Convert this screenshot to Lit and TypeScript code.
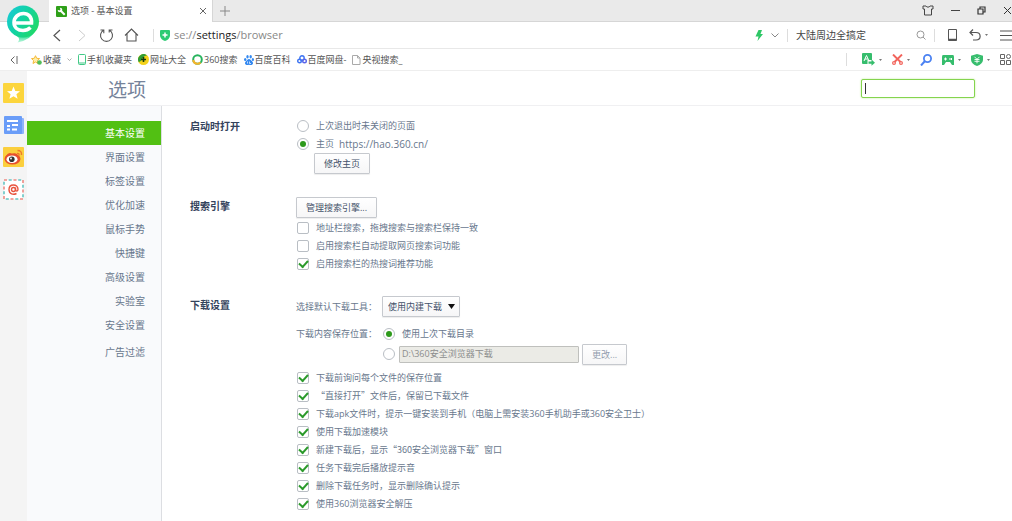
import { LitElement, html, css, svg } from "lit";
import { customElement } from "lit/decorators.js";
import { classMap } from "lit/directives/class-map.js";

const icon = (w: number, h: number, box: string, body: unknown) =>
  html`<svg width=${w} height=${h} viewBox=${box} fill="none" aria-hidden="true">${body}</svg>`;

const logo = icon(34, 38, "0 0 34 38", svg`
  <defs>
    <linearGradient id="lg" x1="0" y1="0" x2="1" y2="0.6"><stop offset="0" stop-color="#18c9e0"/><stop offset="0.55" stop-color="#12d3a0"/><stop offset="1" stop-color="#1fd86a"/></linearGradient>
    <linearGradient id="tail" x1="0" y1="0" x2="0" y2="1"><stop offset="0" stop-color="#14d58c"/><stop offset="0.5" stop-color="#22dc90"/><stop offset="1" stop-color="#7cecba" stop-opacity="0.5"/></linearGradient>
  </defs>
  <path d="M3.500 24L12.500 32.500Q14 35 11.500 37.500Q25 35 30.500 24Z" fill="url(#tail)"/>
  <circle cx="17" cy="16.500" r="16" fill="url(#lg)"/>
  <path d="M8 18H25.500C26 12 22.500 8.500 17.500 8.500C12 8.500 8 12.500 8 17.500C8 22.500 12 25.500 17 25.500C20 25.500 22.500 24.500 24.500 22.500" stroke="#fff" stroke-width="3.600"/>`);
const wrench = icon(11, 11, "0 0 11 11", svg`<rect width="11" height="11" rx="1" fill="#2fa019"/><path d="M5 5L8.700 8.700" stroke="#fff" stroke-width="2"/><circle cx="4" cy="4" r="2.300" fill="#fff"/><path d="M1 1H3.500L4.500 3.500L3.500 4.500L1 3.500Z" fill="#2fa019"/>`);
const cross = icon(8, 8, "0 0 8 8", svg`<path d="M1 1L7 7M7 1L1 7" stroke="#666"/>`);
const plus = icon(10, 10, "0 0 10 10", svg`<path d="M5 0V10M0 5H10" stroke="#888"/>`);
const shirt = icon(12, 11, "0 0 12 11", svg`<path d="M1 1H4C4.500 2.500 7.500 2.500 8 1H11V4H9.500V10H2.500V4H1Z" stroke="#444"/>`);
const minimize = icon(9, 9, "0 0 9 9", svg`<path d="M0 4.500H9" stroke="#444"/>`);
const restore = icon(9, 9, "0 0 9 9", svg`<path d="M1 3H6V8H1ZM3 3V1H8V6H6" stroke="#333" stroke-width="1.200"/>`);
const closeWin = icon(9, 9, "0 0 9 9", svg`<path d="M1 1L8 8M8 1L1 8" stroke="#333"/>`);
const back = icon(8, 13, "0 0 8 13", svg`<path d="M7 1L1 6.500L7 12" stroke="#555" stroke-width="1.200"/>`);
const forward = icon(8, 13, "0 0 8 13", svg`<path d="M1 1L7 6.500L1 12" stroke="#ccc"/>`);
const reload = icon(15, 15, "0 0 15 15", svg`<path d="M4.500 2.200A6 6 0 1 0 10.500 2.200M1.500 2H4.800V5.300M13.500 2H10.200V4.500" stroke="#555" stroke-width="1.100"/>`);
const home = icon(15, 14, "0 0 15 14", svg`<path d="M1 7.500L7.500 1L14 7.500M3 6V13H12V6" stroke="#555" stroke-width="1.100"/>`);
const guard = icon(10, 11, "0 0 10 11", svg`<path d="M1 0H9Q10 0 10 1V6Q9 10 5 11Q1 10 0 6V1Q0 0 1 0Z" fill="#2fcb74"/><path d="M5 2.500V7.500M2.500 5H7.500" stroke="#fff" stroke-width="1.500"/>`);
const bolt = icon(8, 11, "0 0 8 11", svg`<path d="M3.500 0H7L5.500 4H8L2.500 11L3.500 6.500H0.500Z" fill="#2ec766"/>`);
const chevron = icon(8, 5, "0 0 8 5", svg`<path d="M0.500 0.500L4 4L7.500 0.500" stroke="#888"/>`);
const smallChevron = icon(5, 3, "0 0 5 3", svg`<path d="M0.500 0.500L2.500 2.500L4.500 0.500" stroke="#999" stroke-width="0.800"/>`);
const lens = icon(10, 10, "0 0 10 10", svg`<circle cx="4.500" cy="4.500" r="3.500" stroke="#999"/><path d="M7 7L9.500 9.500" stroke="#999"/>`);
const phone = icon(9, 12, "0 0 9 12", svg`<path d="M0.500 0.500H8.500V11.500H0.500Z" stroke="#555"/><path d="M0 10.500H9" stroke="#555" stroke-width="1.500"/>`);
const undo = icon(12, 12, "0 0 12 12", svg`<path d="M4 0.500L1 3.500L4 6.500M1 3.500H7C12.500 3.500 12.500 11 7 11H4" stroke="#555" stroke-width="1.200"/>`);
const menu = icon(12, 11, "0 0 12 11", svg`<path d="M0 1H12M0 5.500H12M0 10H12" stroke="#555"/>`);
const dot = icon(3, 2, "0 0 3 2", svg`<path d="M0 0H3L1.500 2Z" fill="#777"/>`);

const fold = icon(8, 8, "0 0 8 8", svg`<path d="M4.500 0.500L1 4L4.500 7.500M7 0V8" stroke="#666"/>`);
const favourite = icon(11, 10, "0 0 11 10", svg`<path d="M4.500 0.700L5.700 3.300L8.600 3.600L6.400 5.600L7 8.500L4.500 7L2 8.500L2.600 5.600L0.500 3.600L3.300 3.300Z" fill="#fff0a8" stroke="#f5b93a"/><circle cx="8.500" cy="7.500" r="2.300" fill="#51bd5a"/>`);
const mobile = icon(8, 11, "0 0 8 11", svg`<rect x="0.500" y="0.500" width="7" height="10" rx="1" stroke="#42c987"/><path d="M1 9H7" stroke="#42c987"/>`);
const hao = icon(11, 11, "0 0 11 11", svg`<circle cx="5.500" cy="5.500" r="5.500" fill="#f3d21b"/><path d="M0.800 8.300A5.500 5.500 0 0 1 9 1.300Q6 1.500 4.500 4.500T0.800 8.300Z" fill="#2f9d35"/><path d="M5.500 3V8M3 5.500H8" stroke="#153d10" stroke-width="1.600"/>`);
const ring = icon(11, 11, "0 0 11 11", svg`<circle cx="5.500" cy="5.500" r="4.300" stroke="#27b35d" stroke-width="2"/><path d="M1.200 6A4.300 4.300 0 0 0 8.500 8.500" stroke="#f6b32b" stroke-width="2"/>`);
const paw = icon(10, 10, "0 0 10 10", svg`<g fill="#3388f0"><ellipse cx="3.500" cy="1.700" rx="1.200" ry="1.700"/><ellipse cx="6.700" cy="1.700" rx="1.200" ry="1.700"/><ellipse cx="1.200" cy="4.500" rx="1.200" ry="1.600"/><ellipse cx="8.900" cy="4.500" rx="1.100" ry="1.600"/><path d="M5 4C6.500 4 7 5.500 8.500 6.700C10 9 8 10.500 5 9.700C2 10.500 0 9 1.500 6.700C3 5.500 3.500 4 5 4Z"/></g><path d="M3.500 6.500V8.500M5.500 6.500V8.500H7" stroke="#fff" stroke-width="0.700"/>`);
const cloud = icon(10, 9, "0 0 10 9", svg`<circle cx="5" cy="3" r="2.200" stroke="#3d74f2" stroke-width="1.400"/><circle cx="2.500" cy="6" r="1.800" stroke="#3d74f2" stroke-width="1.400"/><circle cx="7.500" cy="6" r="1.800" stroke="#5a64e8" stroke-width="1.400"/>`);
const page = icon(9, 10, "0 0 9 10", svg`<path d="M0.500 0.500H5.500L8 3V9.500H0.500ZM5.500 0.500V3H8" stroke="#aaa"/>`);

const translate = icon(13, 13, "0 0 13 13", svg`<rect width="10" height="11" rx="1" fill="#36bd6d"/><path d="M2 8L4.500 2.500L7 8M3 6H6" stroke="#fff"/><path d="M5.500 9.500H13" stroke="#fff" stroke-width="5"/><path d="M6.500 8.500H9.500V6.500L13 9.700L9.500 12.800V10.800H6.500Z" fill="#36bd6d"/>`);
const scissors = icon(11, 11, "0 0 11 11", svg`<path d="M1 0.500L8.500 8M10 0.500L2.500 8" stroke="#f2645c" stroke-width="1.900"/><circle cx="2" cy="9" r="1.400" stroke="#f2645c" stroke-width="1.200"/><circle cx="9" cy="9" r="1.400" stroke="#f2645c" stroke-width="1.200"/>`);
const search = icon(12, 12, "0 0 12 12", svg`<circle cx="7.500" cy="4.500" r="3.600" stroke="#4b82f2" stroke-width="1.800"/><path d="M5 7L1 11.500" stroke="#4b82f2" stroke-width="2"/>`);
const game = icon(12, 10, "0 0 12 10", svg`<path d="M1 0H11Q12 0 12 2V10H10L8 7H4L2 10H0V2Q0 0 1 0Z" fill="#36bd6d"/><path d="M2 4H5M3.500 2.500V5.500M8 3V5M9.500 3V5" stroke="#fff"/>`);
const money = icon(12, 12, "0 0 12 12", svg`<path d="M6 0L12 1.700V6Q11.500 10 6 12Q0.500 10 0 6V1.700Z" fill="#36bd6d"/><path d="M3.500 2.800L6 5.300L8.500 2.800M6 5.300V9.300M3.500 5.500H8.500M3.500 7.300H8.500" stroke="#fff" stroke-width="0.900"/>`);
const apps = icon(12, 11, "0 0 12 11", svg`<path d="M0.500 0.500H4.500V4.500H0.500ZM0.500 6.500H4.500V10.500H0.500ZM6.500 6.500H10.500V10.500H6.500Z" stroke="#666"/><circle cx="8.500" cy="2.500" r="2" stroke="#666"/>`);

const starApp = icon(21, 20, "0 0 21 20", svg`<rect width="21" height="20" rx="1" fill="#fcd53c"/><path d="M10.500 3.500L12.300 8L17 8.300L13.400 11.200L14.600 15.800L10.500 13.300L6.400 15.800L7.600 11.200L4 8.300L8.700 8Z" fill="#fff"/>`);
const newsApp = icon(20, 20, "0 0 20 20", svg`<rect x="3" y="3" width="17" height="16" rx="1" fill="#8fb4fa"/><rect y="1" width="18" height="18" rx="1" fill="#6a9df8"/><path d="M3 6H14M3 11H6M8 10H14M3 14.500H6M8 14.500H13" stroke="#fff" stroke-width="2.200"/>`);
const weiboApp = icon(21, 20, "0 0 21 20", svg`<rect width="21" height="20" rx="1" fill="#fbcf3d"/><ellipse cx="9.500" cy="12" rx="8" ry="5.500" fill="#e8502d"/><path d="M3 9Q6 4 9 7Q14 5 15 9Z" fill="#e8502d"/><ellipse cx="9" cy="12.300" rx="5.500" ry="3.800" fill="#fff"/><circle cx="8.800" cy="12.300" r="2.800" fill="#333"/><circle cx="8" cy="11.500" r="0.900" fill="#fff"/><path d="M14 6.500Q16.500 6 16 8.500M14.500 3.500Q19 3.500 18.500 8" stroke="#ee7a2b" stroke-width="1.400"/>`);
const mailApp = icon(21, 21, "0 0 21 21", svg`<rect x="1" y="1" width="19" height="19" fill="#fff" stroke="#ee8a82" stroke-width="1.600" stroke-dasharray="3 6.500"/><rect x="1" y="1" width="19" height="19" stroke="#64c5c4" stroke-width="1.600" stroke-dasharray="3 6.500" stroke-dashoffset="-4.700"/><circle cx="10.500" cy="10.500" r="2" stroke="#e8553f" stroke-width="1.400"/><path d="M12.500 8.500V11.500Q14.800 13 15 10.300C15 4.500 6 4.500 6 10.500C6 15.500 10.500 16 13.500 14.500" stroke="#e8553f" stroke-width="1.400"/>`);

@customElement("app-root")
export class AppRoot extends LitElement {
  static styles = css`
    :host { display: block; min-height: 100vh; background: #fff; color: #68778d; font: 9px/18px "Open Sans", "Noto Sans CJK SC", sans-serif; }
    * { box-sizing: border-box; }
    .shell { display: flex; flex-direction: column; min-height: 100vh; overflow: hidden; }
    svg { display: block; flex: none; }
    button, input, select { font: inherit; color: inherit; margin: 0; }
    .plain { border: 0; background: none; padding: 0; display: flex; align-items: center; justify-content: center; flex: none; }
    .top { position: relative; }
    .logo { position: absolute; left: 6px; top: 5px; }
    .tabs { display: flex; align-items: stretch; height: 22px; padding-left: 49px; background: #eaeaea; border-bottom: 1px solid #d6d6d6; }
    .tab { display: flex; align-items: center; gap: 4px; width: 164px; padding: 0 5px 0 7px; height: 22px; background: #fff; border-right: 1px solid #d6d6d6; color: #555; }
    .tab .title { flex: 1; }
    .add { margin-left: 7px; }
    .window { display: flex; gap: 17px; margin-left: auto; align-items: center; }
    .bar { display: flex; align-items: center; height: 27px; border-bottom: 1px solid #e8e8e8; padding-left: 49px; }
    .nav { display: flex; align-items: center; gap: 10px; padding-right: 14px; }
    .nav .plain { width: 15px; }
    .rule { width: 1px; height: 13px; background: #ddd; flex: none; }
    .address { flex: 1; min-width: 0; display: flex; align-items: center; gap: 4px; padding-left: 6px; font-size: 11px; color: #888; }
    .address b { font-weight: 400; color: #222; }
    .tools { display: flex; align-items: center; gap: 8px; }
    .query { width: 112px; border: 0; outline: 0; padding: 0; background: none; font-size: 10px; color: #444; }
    .end { display: flex; align-items: center; gap: 12px; padding-left: 13px; }
    .pair { display: flex; align-items: center; gap: 4px; }
    .marks { display: flex; align-items: center; height: 22px; border-bottom: 1px solid #eee; padding-left: 10px; color: #555; }
    .marks a { display: flex; align-items: center; gap: 1px; color: inherit; text-decoration: none; white-space: nowrap; }
    .links { display: flex; align-items: center; gap: 6px; padding-left: 13px; }
    .plugins { display: flex; align-items: center; gap: 10px; margin-left: auto; }
    .plugins .rule { margin-right: 5px; }
    .body { display: flex; flex: 1; }
    .dock { display: flex; flex-direction: column; gap: 12px; width: 27px; padding: 12px 2px; background: #f4f4f4; }
    .page { flex: 1; display: flex; flex-direction: column; min-width: 0; }
    .head { display: flex; align-items: center; justify-content: space-between; height: 35px; padding: 0 37px 0 81px; border-bottom: 1px solid #f0f0f2; }
    h1 { margin: 0; padding-top: 3px; font-size: 19px; line-height: 28px; font-weight: 400; color: #75839a; }
    .find { width: 114px; height: 19px; border: 1px solid #85d44e; border-radius: 2px; outline: 0; padding: 0 2px; box-shadow: 0 0 2px #b8ec90; }
    .find:placeholder-shown { background: linear-gradient(#333, #333) 3px 3px / 1px 11px no-repeat #fff; caret-color: transparent; }
    .main { display: flex; flex: 1; }
    .side { width: 135px; padding-top: 15px; background: #f9fafc; border-right: 1px solid #dcdee2; display: flex; flex-direction: column; }
    .side a { display: block; font-size: 10px; line-height: 24px; padding-right: 16px; text-align: right; color: #68778d; text-decoration: none; }
    .side a.on { background: #52c013; color: #fff; }
    .side a.last { padding-top: 3px; }
    .content { flex: 1; padding: 11px 20px 10px 28px; display: flex; flex-direction: column; gap: 23px; }
    section { display: grid; grid-template-columns: 106px 1fr; align-items: start; }
    h2 { margin: 0; font-size: 10px; line-height: 19px; font-weight: 700; color: #34435c; }
    .row { display: flex; align-items: center; min-height: 18px; gap: 5px; }
    .row label { display: flex; align-items: center; gap: 6px; }
    .quoted { font-family: "Noto Sans CJK SC", sans-serif; }
    .tick { appearance: none; width: 12px; height: 12px; margin: 0 1px; border: 1px solid #b9bec4; border-radius: 2px; background: #fff; display: grid; place-items: center; flex: none; }
    .tick:checked::before { content: ""; width: 7px; height: 4px; border: solid #2b9a2b; border-width: 0 0 2px 2px; transform: rotate(-48deg); margin-bottom: 2px; }
    .radio { border-radius: 50%; }
    .radio:checked::before { width: 6px; height: 6px; border: 0; border-radius: 50%; background: #2e9a1c; transform: none; margin: 0; }
    .btn { height: 21px; padding: 0 9px; border: 1px solid #c6c9ce; border-radius: 1px; background: linear-gradient(#fff, #f6f6f7); color: #44526a; box-shadow: 0 1px 1px #eee; line-height: 19px; }
    .btn:disabled { color: #929dae; }
    .indent { padding-left: 18px; }
    .pick { position: relative; display: flex; align-items: center; }
    .pick select { appearance: none; width: 78px; border-radius: 1px; padding: 0 5px; }
    .arrow { position: absolute; right: 5px; pointer-events: none; }
    .tool { min-height: 21px; margin-bottom: 8px; }
    .place { display: grid; grid-template-columns: max-content 1fr; column-gap: 5px; margin-bottom: 4px; }
    .path { width: 180px; height: 17px; border: 1px solid #bfc0bd; border-radius: 1px; background: #ebebe6; color: #8b8d8d; padding: 0 2px; }
    .folder { gap: 3px; height: 22px; }
    .url { font-size: 10px; }
    .stack { display: flex; flex-direction: column; align-items: flex-start; }
    .stack .btn { margin-bottom: 1px; }
  `;

  private bookmarks: [unknown, string][] = [
    [mobile, "手机收藏夹"], [hao, "网址大全"], [ring, "360搜索"], [paw, "百度百科"], [cloud, "百度网盘-"], [page, "央视搜索_"],
  ];
  private menuItems = ["基本设置", "界面设置", "标签设置", "优化加速", "鼠标手势", "快捷键", "高级设置", "实验室", "安全设置", "广告过滤"];
  private downloadOptions = [
    "下载前询问每个文件的保存位置",
    "“直接打开”文件后，保留已下载文件",
    "下载apk文件时，提示一键安装到手机（电脑上需安装360手机助手或360安全卫士）",
    "使用下载加速模块",
    "新建下载后，显示“360安全浏览器下载”窗口",
    "任务下载完后播放提示音",
    "删除下载任务时，显示删除确认提示",
    "使用360浏览器安全解压",
  ];

  private check(text: string, on = true) {
    return html`<div class="row"><label class=${classMap({ quoted: text.includes("“") })}><input class="tick" type="checkbox" ?checked=${on}>${text}</label></div>`;
  }

  private iconButton(label: string, glyph: unknown) {
    return html`<button class="plain" aria-label=${label}>${glyph}</button>`;
  }

  firstUpdated() {
    this.renderRoot.querySelector<HTMLInputElement>(".find")?.focus();
  }

  render() {
    return html`<div class="shell">
      <header class="top">
        <div class="tabs">
          <div class="tab">${wrench}<span class="title">选项 - 基本设置</span>${this.iconButton("关闭标签", cross)}</div>
          <button class="plain add" aria-label="新标签">${plus}</button>
          <div class="window">${this.iconButton("皮肤", shirt)}${this.iconButton("最小化", minimize)}${this.iconButton("还原", restore)}${this.iconButton("关闭", closeWin)}</div>
        </div>
        <div class="bar">
          <nav class="nav">${this.iconButton("后退", back)}${this.iconButton("前进", forward)}${this.iconButton("刷新", reload)}${this.iconButton("主页", home)}</nav>
          <span class="rule"></span>
          <div class="address">${guard}<span>se://<b>settings</b>/browser</span></div>
          <div class="tools">${this.iconButton("极速模式", bolt)}${this.iconButton("更多", chevron)}<span class="rule"></span>
            <input class="query" aria-label="搜索" value="大陆周边全搞定">${this.iconButton("搜索", lens)}<span class="rule"></span></div>
          <div class="end">${this.iconButton("手机", phone)}<span class="pair">${this.iconButton("恢复", undo)}${dot}</span>${this.iconButton("菜单", menu)}</div>
        </div>
        <div class="marks">
          ${this.iconButton("收起", fold)}
          <div class="links">
            <a href="#">${favourite}<span>收藏</span></a>${smallChevron}
            ${this.bookmarks.map(([glyph, name]) => html`<a href="#">${glyph}<span>${name}</span></a>`)}
          </div>
          <div class="plugins"><span class="rule"></span>
            <span class="pair">${this.iconButton("翻译", translate)}${dot}</span>
            <span class="pair">${this.iconButton("截图", scissors)}${dot}</span>
            ${this.iconButton("查找", search)}
            <span class="pair">${this.iconButton("游戏", game)}${dot}</span>
            <span class="pair">${this.iconButton("网银", money)}${dot}</span>
            ${this.iconButton("扩展", apps)}</div>
        </div>
        <div class="logo">${logo}</div>
      </header>
      <div class="body">
        <aside class="dock">${this.iconButton("收藏", starApp)}${this.iconButton("新闻", newsApp)}${this.iconButton("微博", weiboApp)}${this.iconButton("邮件", mailApp)}</aside>
        <div class="page">
          <div class="head"><h1>选项</h1><input class="find" type="text" placeholder=" " aria-label="搜索设置"></div>
          <div class="main">
            <nav class="side">
              ${this.menuItems.map((name, i) => html`<a href="#" class=${classMap({ on: i === 0, last: i === 9 })}>${name}</a>`)}
            </nav>
            <main class="content">
              <section><h2>启动时打开</h2>
                <div>
                  <div class="row"><label><input class="tick radio" type="radio" name="start">上次退出时未关闭的页面</label></div>
                  <div class="row"><label><input class="tick radio" type="radio" name="start" checked>主页</label><span class="url">https://hao.360.cn/</span></div>
                  <div class="indent"><button class="btn">修改主页</button></div>
                </div>
              </section>
              <section><h2>搜索引擎</h2>
                <div class="stack">
                  <button class="btn">管理搜索引擎...</button>
                  ${this.check("地址栏搜索，拖拽搜索与搜索栏保持一致", false)}
                  ${this.check("启用搜索栏自动提取网页搜索词功能", false)}
                  ${this.check("启用搜索栏的热搜词推荐功能")}
                </div>
              </section>
              <section><h2>下载设置</h2>
                <div>
                  <div class="row tool"><label for="tool">选择默认下载工具：</label>
                    <span class="pick"><select id="tool" class="btn"><option>使用内建下载</option></select><span class="arrow">${icon(7, 5, "0 0 7 5", svg`<path d="M0 0H7L3.500 5Z" fill="#111"/>`)}</span></span></div>
                  <div class="place">
                    <span>下载内容保存位置：</span>
                    <div>
                      <div class="row"><label><input class="tick radio" type="radio" name="dir" checked>使用上次下载目录</label></div>
                      <div class="row folder"><input class="tick radio" type="radio" name="dir" aria-label="指定目录"><input class="path" aria-label="下载目录" value="D:\\360安全浏览器下载" disabled><button class="btn" disabled>更改...</button></div>
                    </div>
                  </div>
                  ${this.downloadOptions.map((t) => this.check(t))}
                </div>
              </section>
            </main>
          </div>
        </div>
      </div>
    </div>`;
  }
}
